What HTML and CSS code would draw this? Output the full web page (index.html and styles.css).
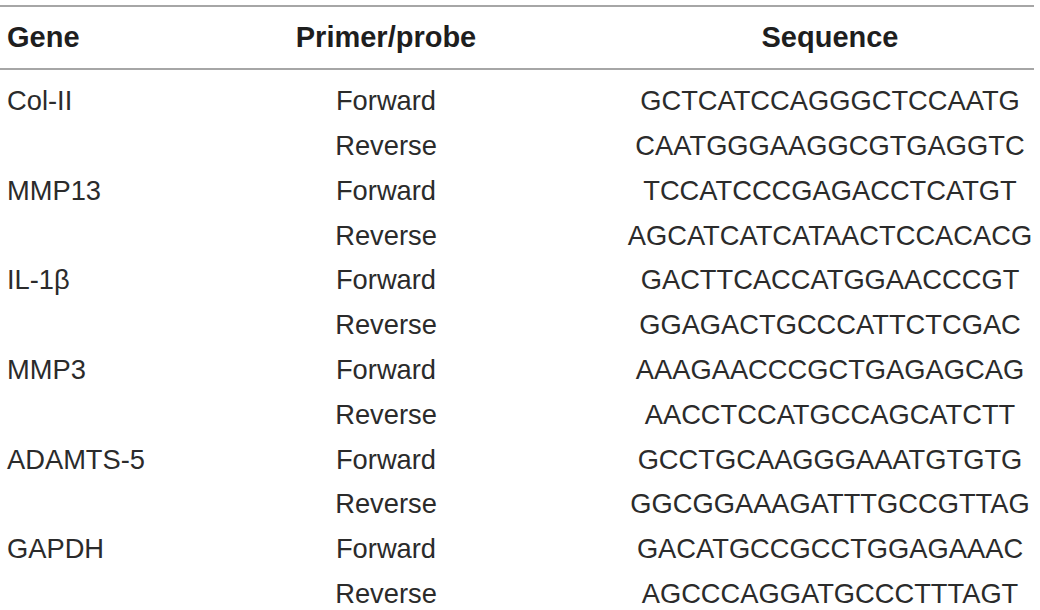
FILE: index.html
```html
<!DOCTYPE html>
<html>
<head>
<meta charset="utf-8">
<link rel="stylesheet" href="styles.css">
</head>
<body>
<div class="table">
  <div class="row head">
    <div class="c1">Gene</div>
    <div class="c2">Primer/probe</div>
    <div class="c3">Sequence</div>
  </div>
  <div class="body">
    <div class="row"><div class="c1">Col-II</div><div class="c2">Forward</div><div class="c3">GCTCATCCAGGGCTCCAATG</div></div>
    <div class="row"><div class="c1"></div><div class="c2">Reverse</div><div class="c3">CAATGGGAAGGCGTGAGGTC</div></div>
    <div class="row"><div class="c1">MMP13</div><div class="c2">Forward</div><div class="c3">TCCATCCCGAGACCTCATGT</div></div>
    <div class="row"><div class="c1"></div><div class="c2">Reverse</div><div class="c3">AGCATCATCATAACTCCACACG</div></div>
    <div class="row"><div class="c1">IL-1β</div><div class="c2">Forward</div><div class="c3">GACTTCACCATGGAACCCGT</div></div>
    <div class="row"><div class="c1"></div><div class="c2">Reverse</div><div class="c3">GGAGACTGCCCATTCTCGAC</div></div>
    <div class="row"><div class="c1">MMP3</div><div class="c2">Forward</div><div class="c3">AAAGAACCCGCTGAGAGCAG</div></div>
    <div class="row"><div class="c1"></div><div class="c2">Reverse</div><div class="c3">AACCTCCATGCCAGCATCTT</div></div>
    <div class="row"><div class="c1">ADAMTS-5</div><div class="c2">Forward</div><div class="c3">GCCTGCAAGGGAAATGTGTG</div></div>
    <div class="row"><div class="c1"></div><div class="c2">Reverse</div><div class="c3">GGCGGAAAGATTTGCCGTTAG</div></div>
    <div class="row"><div class="c1">GAPDH</div><div class="c2">Forward</div><div class="c3">GACATGCCGCCTGGAGAAAC</div></div>
    <div class="row"><div class="c1"></div><div class="c2">Reverse</div><div class="c3">AGCCCAGGATGCCCTTTAGT</div></div>
  </div>
</div>
</body>
</html>
```
FILE: styles.css
```css
html, body {
  margin: 0;
  padding: 0;
  background: #ffffff;
}
body {
  font-family: "Liberation Sans", Arial, sans-serif;
  color: #2b2b2b;
  overflow: hidden;
}
.table {
  margin-top: 5px;
  width: 1034px;
  border-top: 2px solid #a6a6a6;
}
.row {
  display: grid;
  grid-template-columns: 270px 232px 1fr;
  height: 44.8px;
  line-height: 44.8px;
  font-size: 27.3px;
  white-space: nowrap;
}
.head {
  height: 61px;
  line-height: 61px;
  font-size: 29px;
  font-weight: bold;
  color: #1e1e1e;
  border-bottom: 2px solid #a6a6a6;
}
.body {
  padding-top: 9.2px;
}
.c1 {
  padding-left: 7px;
}
.c2 {
  text-align: center;
}
.c3 {
  text-align: center;
  padding-left: 124px;
}
```
